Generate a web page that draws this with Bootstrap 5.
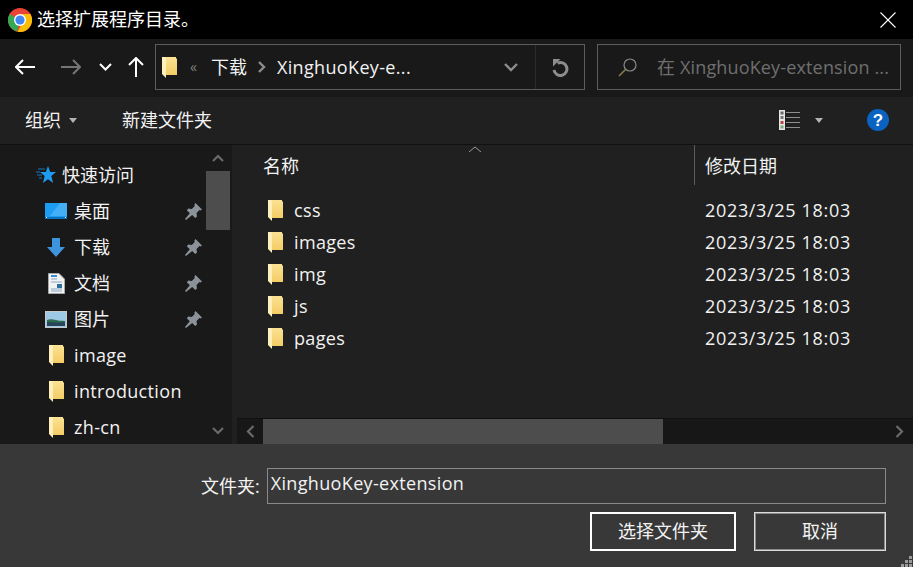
<!DOCTYPE html>
<html lang="zh-CN">
<head>
<meta charset="utf-8">
<title>选择扩展程序目录。</title>
<link href="https://cdn.jsdelivr.net/npm/bootstrap@5.3.0/dist/css/bootstrap.min.css" rel="stylesheet">
<style>
html,body{height:100%;margin:0;overflow:hidden;background:#383838}
body{font-family:"Open Sans","Noto Sans CJK SC",sans-serif;font-size:18px;line-height:24px;color:#f2f2f2}
.dlg{width:913px;height:567px;display:flex;flex-direction:column;position:relative}
.lat{letter-spacing:.34px}
.tbar{height:39px;background:#000;padding-left:8px;flex:none}
.tbar-title{margin-left:5px;font-size:18px;color:#fff;margin-top:-2px}
.tbar-close{margin-left:auto;margin-right:17px;line-height:0}
.navrow{height:58px;background:#191919;flex:none;padding:5px 13px 7px 0}
.nb{flex:none;line-height:0;display:flex;justify-content:center}
.nb-back{width:50px}.nb-fwd{width:41px}.nb-drop{width:28px}.nb-up{width:33px}
.addr,.srch{height:46px;border:1px solid #5c5c5c}
.addr{width:430px;margin-left:3px;flex:none;padding-left:6px;color:#f2f2f2}
.addr-sep{font-size:14px;color:#808080;margin:0 13px 0 13px;line-height:1;width:8px}
.addr-chev{margin:0 11px}
.addr-arr{width:49px;height:100%;border-right:1px solid #2c2c2c;margin-left:auto}
.addr-rel{width:48px}
.srch{width:304px;margin-left:12px;flex:none;color:#6f6f6f;padding-left:20px}
.srch span{margin-left:20px;white-space:nowrap;letter-spacing:.15px}
.tools{height:48px;background:#202020;flex:none;padding:0 24px 1px 25px;border-bottom:1px solid #111}
.tools-new{margin-left:45px}
.tri{width:0;height:0;border:4px solid transparent;border-top:5px solid #b4b4b4;border-bottom:0;margin-left:8px;display:inline-block}
.tri-view{margin-left:15px}
.help-ic{margin-left:44px}
.panes{flex:1 1 auto;min-height:0;display:flex}
.side{width:232px;background:#191919;flex:none;display:flex}
.side-list{width:206px;flex:none;padding-top:12px;overflow:hidden}
.si{height:36px;display:flex;align-items:center;position:relative}
.si-ic{width:36px;margin-left:38px;display:flex;justify-content:center;flex:none;line-height:0}
.si-quick{padding-left:36px}
.si-quick span{margin-left:6px}
.pin-slot{position:absolute;left:185px;top:10px;line-height:0}
.vs{width:24px;flex:none;display:flex;flex-direction:column;align-items:stretch}
.vs-up{height:26px;display:flex;align-items:center;justify-content:center}
.vs-thumb{height:59px;background:#4d4d4d}
.vs-down{margin-top:auto;height:26px;display:flex;align-items:center;justify-content:center}
.main{flex:1 1 auto;min-width:0;background:#202020;padding-left:4px;display:flex;flex-direction:column;position:relative}
.colh{height:40px;flex:none;display:flex;align-items:center}
.colh-name{width:459px;padding-left:27px;flex:none;height:100%;display:flex;align-items:center;padding-top:1px;border-right:1px solid #5c5c5c}
.colh-date{padding-left:10px;padding-top:1px}
.sort{position:absolute;left:236px;top:0;line-height:0}
.rows{flex:1 1 auto;padding-top:9px}
.fr{height:32px;display:flex;align-items:center}
.fr-name{width:460px;padding-left:32px;display:flex;align-items:center;flex:none}
.fr-name span{margin-left:11px}
.fr-date{padding-left:9px;white-space:nowrap;letter-spacing:.67px}
.hs{height:26px;background:#171717;border-top:1px solid #101010;display:flex;flex:none;margin-left:1px}
.hs-l,.hs-r{width:26px;display:flex;align-items:center;justify-content:center;flex:none}
.hs-thumb{width:400px;background:#4d4d4d;flex:none}
.hs-r{margin-left:auto;width:27px}
.foot{height:123px;background:#383838;flex:none;padding:24px 27px 0 0;position:relative}
.foot-l{margin-left:201px;margin-right:7px}
.fname.form-control{width:619px;height:36px;flex:none;background:#383838;border:1px solid #8a8a8a;border-radius:0;color:#f2f2f2;font-size:18px;padding:0 3px 6px;box-shadow:none;letter-spacing:.34px}
.foot-b{margin-top:8px;justify-content:flex-end;gap:18px;display:flex}
.dbtn.btn{height:39px;border-radius:0;background:#383838;color:#f2f2f2;font-size:18px;padding:0;display:flex;align-items:center;justify-content:center}
.dbtn-p.btn{width:146px;border:2px solid #fff}
.dbtn-s.btn{width:132px;border:1px solid #dcdcdc;box-shadow:inset 0 0 0 1px #8a8a8a}
.grip{position:absolute;right:0;bottom:0;line-height:0}
</style>
</head>
<body>
<div class="dlg">
  <div class="tbar d-flex align-items-center">
    <svg width="24" height="24" viewBox="0 0 24 24">
      <circle cx="12" cy="12" r="12" fill="#ea4335"/>
      <path d="M12 12 1.6 6A12 12 0 0 0 9 23.6z" fill="#34a853"/>
      <path d="M12 6h10.4A12 12 0 0 1 9.5 23.7L16 12z" fill="#fbbc05"/>
      <circle cx="12" cy="12" r="6" fill="#fff"/><circle cx="12" cy="12" r="4.6" fill="#4285f4"/>
    </svg>
    <span class="tbar-title">选择扩展程序目录。</span>
    <span class="tbar-close"><svg width="16" height="16" viewBox="0 0 16 16"><path d="M.5.5l15 15M15.5.5l-15 15" stroke="#fff" stroke-width="1.1" fill="none"/></svg></span>
  </div>

  <div class="navrow d-flex align-items-center">
    <span class="nb nb-back"><svg width="20" height="16" viewBox="0 0 20 16"><path d="M1 8h19M8 1 1 8l7 7" stroke="#fff" stroke-width="2" fill="none"/></svg></span>
    <span class="nb nb-fwd"><svg width="20" height="16" viewBox="0 0 20 16"><path d="M0 8h19M12 1l7 7-7 7" stroke="#757575" stroke-width="2" fill="none"/></svg></span>
    <span class="nb nb-drop"><svg width="13" height="8" viewBox="0 0 13 8"><path d="M1 1l5.500 5.500L12 1" stroke="#fff" stroke-width="2" fill="none"/></svg></span>
    <span class="nb nb-up"><svg width="16" height="20" viewBox="0 0 16 20"><path d="M8 20V2M1 8l7-7 7 7" stroke="#fff" stroke-width="2" fill="none"/></svg></span>
    <div class="addr d-flex align-items-center">
      <svg width="15" height="21" viewBox="0 0 15 21"><use href="#fld"/></svg>
      <span class="addr-sep">«</span>
      <span>下载</span>
      <svg class="addr-chev" width="8" height="12" viewBox="0 0 8 12"><path d="M1 1l5 5-5 5" stroke="#8d8d8d" stroke-width="2.400" fill="none"/></svg>
      <span class="lat">XinghuoKey-e...</span>
      <span class="addr-arr d-flex align-items-center justify-content-center">
        <svg width="14" height="9" viewBox="0 0 14 9"><path d="M1 1l6 6 6-6" stroke="#8d8d8d" stroke-width="2.400" fill="none"/></svg>
      </span>
      <span class="addr-rel d-flex justify-content-center">
        <svg width="18" height="19" viewBox="0 0 18 19"><path d="M6.500 5.100A6.500 6.500 0 1 1 3 12" stroke="#8d8d8d" stroke-width="3" fill="none"/><path d="M2 1h7.500L2 8.500z" fill="#8d8d8d"/></svg>
      </span>
    </div>
    <div class="srch d-flex align-items-center">
      <svg width="19" height="19" viewBox="0 0 19 19"><circle cx="12" cy="7" r="6" stroke="#8a8a8a" fill="none" stroke-width="1.200"/><path d="M7.500 11.500 1 18" stroke="#8a7a50" stroke-width="1.600"/></svg>
      <span>在 XinghuoKey-extension ...</span>
    </div>
  </div>

  <div class="tools d-flex align-items-center">
    <span>组织</span><i class="tri"></i>
    <span class="tools-new">新建文件夹</span>
    <span class="ms-auto d-flex align-items-center">
      <svg width="21" height="20" viewBox="0 0 21 20">
        <rect width="6" height="20" fill="#e6e6e6"/>
        <rect x="1.500" y="1.500" width="3" height="3" fill="#666"/><rect x="1.500" y="6" width="3" height="3" fill="#777"/><rect x="1.500" y="11" width="3" height="3" fill="#b44"/><rect x="1.500" y="15.500" width="3" height="3" fill="#7a7"/>
        <path d="M7 2.500h14M7 7.500h14M7 12.500h14M7 17.500h14" stroke="#8f8f8f"/>
      </svg>
      <i class="tri tri-view"></i>
      <svg class="help-ic" width="22" height="22" viewBox="0 0 22 22"><circle cx="11" cy="11" r="11" fill="#0a63c0"/><text x="11" y="17" text-anchor="middle" font-family="Liberation Sans,sans-serif" font-weight="700" font-size="17" fill="#fff">?</text></svg>
    </span>
  </div>

  <div class="panes">
    <div class="side">
      <div class="side-list">
        <div class="si si-quick"><svg width="20" height="18" viewBox="0 0 20 18"><path d="M12 0l2.200 6H20l-4.700 4 1.800 7L12 13.200 6.900 17l1.800-7L4 6h5.800z" fill="#1e9bf0"/><path d="M2 3h7M0 6h4M1 9h5M3 12h3" stroke="#1976b8"/></svg><span>快速访问</span></div>
        <div class="si"><span class="si-ic"><svg width="22" height="16" viewBox="0 0 22 16"><rect width="22" height="16" fill="#1c9cf2"/><path d="M15 0h7v13H5z" fill="#45aff5"/><rect y="14" width="22" height="2" fill="#0b74bf"/><path d="M1 14.500h1M20 14.500h1" stroke="#fff"/></svg></span><span>桌面</span><span class="pin-slot"><svg width="17" height="17" viewBox="0 0 17 17"><use href="#pin"/></svg></span></div>
        <div class="si"><span class="si-ic"><svg width="18" height="19" viewBox="0 0 18 19"><path d="M5 0h8v9h5l-9 10L0 9h5z" fill="#3f94de"/></svg></span><span>下载</span><span class="pin-slot"><svg width="17" height="17" viewBox="0 0 17 17"><use href="#pin"/></svg></span></div>
        <div class="si"><span class="si-ic"><svg width="17" height="21" viewBox="0 0 17 21"><path d="M.5.500H11L16.500 6v14.500H.5z" fill="#f2f2f2" stroke="#a8a8a8"/><path d="M3 6h6M3 9h11M3 16h11M3 18h11" stroke="#8aa8c8"/><rect x="9" y="11" width="5" height="4" fill="#2c6f9e"/><path d="M3 3h6" stroke="#3b8ed0" stroke-width="2"/></svg></span><span>文档</span><span class="pin-slot"><svg width="17" height="17" viewBox="0 0 17 17"><use href="#pin"/></svg></span></div>
        <div class="si"><span class="si-ic"><svg width="22" height="17" viewBox="0 0 22 17"><rect x=".5" y=".5" width="21" height="16" fill="#9fc8e6" stroke="#c8c8c8"/><path d="M2 9c5-2 8 1 18 1v5H2z" fill="#2f6d4f"/><path d="M2 11c7 0 12 1 18 0v4H2z" fill="#27455a"/></svg></span><span>图片</span><span class="pin-slot"><svg width="17" height="17" viewBox="0 0 17 17"><use href="#pin"/></svg></span></div>
        <div class="si"><span class="si-ic"><svg width="15" height="21" viewBox="0 0 15 21"><use href="#fld"/></svg></span><span class="lat">image</span></div>
        <div class="si"><span class="si-ic"><svg width="15" height="21" viewBox="0 0 15 21"><use href="#fld"/></svg></span><span class="lat">introduction</span></div>
        <div class="si"><span class="si-ic"><svg width="15" height="21" viewBox="0 0 15 21"><use href="#fld"/></svg></span><span class="lat">zh-cn</span></div>
      </div>
      <div class="vs">
        <span class="vs-up"><svg width="12" height="8" viewBox="0 0 12 8"><path d="M1 7l5-5 5 5" stroke="#6a6a6a" stroke-width="2.200" fill="none"/></svg></span>
        <div class="vs-thumb"></div>
        <span class="vs-down"><svg width="12" height="8" viewBox="0 0 12 8"><path d="M1 1l5 5 5-5" stroke="#6a6a6a" stroke-width="2.200" fill="none"/></svg></span>
      </div>
    </div>
    <div class="main">
      <span class="sort" aria-hidden="true"><svg width="14" height="8" viewBox="0 0 14 8"><path d="M1 7l6-5 6 5" stroke="#9a9a9a" stroke-width="1" fill="none"/></svg></span>
      <div class="colh"><span class="colh-name">名称</span><span class="colh-date">修改日期</span></div>
      <div class="rows">
        <div class="fr"><span class="fr-name"><svg width="15" height="21" viewBox="0 0 15 21"><use href="#fld"/></svg><span class="lat">css</span></span><span class="fr-date">2023/3/25 18:03</span></div>
        <div class="fr"><span class="fr-name"><svg width="15" height="21" viewBox="0 0 15 21"><use href="#fld"/></svg><span class="lat">images</span></span><span class="fr-date">2023/3/25 18:03</span></div>
        <div class="fr"><span class="fr-name"><svg width="15" height="21" viewBox="0 0 15 21"><use href="#fld"/></svg><span class="lat">img</span></span><span class="fr-date">2023/3/25 18:03</span></div>
        <div class="fr"><span class="fr-name"><svg width="15" height="21" viewBox="0 0 15 21"><use href="#fld"/></svg><span class="lat">js</span></span><span class="fr-date">2023/3/25 18:03</span></div>
        <div class="fr"><span class="fr-name"><svg width="15" height="21" viewBox="0 0 15 21"><use href="#fld"/></svg><span class="lat">pages</span></span><span class="fr-date">2023/3/25 18:03</span></div>
      </div>
      <div class="hs">
        <span class="hs-l"><svg width="9" height="13" viewBox="0 0 9 13"><path d="M7.500 1l-5.500 5.500 5.500 5.500" stroke="#6a6a6a" stroke-width="2.200" fill="none"/></svg></span>
        <div class="hs-thumb"></div>
        <span class="hs-r"><svg width="9" height="13" viewBox="0 0 9 13"><path d="M1.500 1l5.500 5.500-5.500 5.500" stroke="#6a6a6a" stroke-width="2.200" fill="none"/></svg></span>
      </div>
    </div>
  </div>

  <div class="foot">
    <div class="d-flex align-items-center">
      <label class="foot-l" for="fn">文件夹:</label>
      <input id="fn" class="form-control fname" type="text" value="XinghuoKey-extension">
    </div>
    <div class="foot-b">
      <button class="btn dbtn dbtn-p" type="button">选择文件夹</button>
      <button class="btn dbtn dbtn-s" type="button">取消</button>
    </div>
    <span class="grip"><svg width="13" height="11" viewBox="0 0 13 11" fill="#9a9a9a"><rect x="9" y="0" width="3" height="3"/><rect x="5" y="4" width="3" height="3"/><rect x="9" y="4" width="3" height="3"/><rect x="1" y="8" width="3" height="3"/><rect x="5" y="8" width="3" height="3"/><rect x="9" y="8" width="3" height="3"/></svg></span>
  </div>
</div>

<svg width="0" height="0" class="position-fixed" aria-hidden="true">
  <defs>
    <linearGradient id="fg" x1="0" y1="0" x2="0" y2="1"><stop offset="0" stop-color="#fbe293"/><stop offset="1" stop-color="#f4cd66"/></linearGradient>
    <g id="fld">
      <path d="M3 0h11v1.500H15V18H3z" fill="url(#fg)"/>
      <path d="M0 0h3l1 2v19l-4-4z" fill="#fff0bb"/>
    </g>
    <g id="pin">
      <path d="M10.500 0l6.500 6.500-1.500 1-1-.5-3 3 .5 3.500-1.800 1.500-3-3L1 17l-1-1 4.800-5.700-3-3L3.300 5.500l3.500.5 3-3-.5-1.200z" fill="#8b9299"/>
    </g>
  </defs>
</svg>
</body>
</html>
